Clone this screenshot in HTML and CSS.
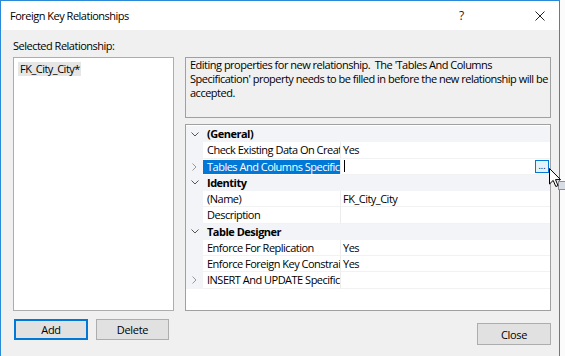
FILE: index.html
```html
<!DOCTYPE html>
<html>
<head>
<meta charset="utf-8">
<link rel="stylesheet" href="styles.css">
</head>
<body>
<div class="dialog">
  <div class="titlebar">
    <span class="title">Foreign Key Relationships</span>
    <span class="help">?</span>
    <svg class="xbtn" width="10" height="10" viewBox="0 0 10 10"><path d="M0.5 0.5 L9.5 9.5 M9.5 0.5 L0.5 9.5" stroke="#222" stroke-width="1" fill="none"/></svg>
  </div>
  <div class="body">
    <div class="label">Selected Relationship:</div>
    <div class="label-spacer"></div>
    <div class="listbox"><div class="item">FK_City_City*</div></div>
    <div class="right">
      <div class="info">Editing properties for new relationship.&nbsp; The 'Tables And Columns<br>Specification' property needs to be filled in before the new relationship will be<br>accepted.</div>
      <div class="pgrid">
        <div class="row cat"><span class="gut"><svg width="8" height="5" viewBox="0 0 8 5"><path d="M0.5 0.5 L4 4 L7.5 0.5" stroke="#555" fill="none"/></svg></span><span class="cname">(General)</span></div>
        <div class="row"><span class="gut"></span><span class="name">Check Existing Data On Creation</span><span class="val">Yes</span></div>
        <div class="row"><span class="gut"><svg width="5" height="8" viewBox="0 0 5 8"><path d="M0.5 0.5 L4 4 L0.5 7.5" stroke="#999" fill="none"/></svg></span><span class="name sel">Tables And Columns Specification</span><span class="val edit"><span class="caret"></span><span class="dots">...</span></span></div>
        <div class="row cat"><span class="gut"><svg width="8" height="5" viewBox="0 0 8 5"><path d="M0.5 0.5 L4 4 L7.5 0.5" stroke="#555" fill="none"/></svg></span><span class="cname">Identity</span></div>
        <div class="row"><span class="gut"></span><span class="name">(Name)</span><span class="val">FK_City_City</span></div>
        <div class="row"><span class="gut"></span><span class="name">Description</span><span class="val"></span></div>
        <div class="row cat"><span class="gut"><svg width="8" height="5" viewBox="0 0 8 5"><path d="M0.5 0.5 L4 4 L7.5 0.5" stroke="#555" fill="none"/></svg></span><span class="cname">Table Designer</span></div>
        <div class="row"><span class="gut"></span><span class="name">Enforce For Replication</span><span class="val">Yes</span></div>
        <div class="row"><span class="gut"></span><span class="name">Enforce Foreign Key Constraint</span><span class="val">Yes</span></div>
        <div class="row"><span class="gut"><svg width="5" height="8" viewBox="0 0 5 8"><path d="M0.5 0.5 L4 4 L0.5 7.5" stroke="#999" fill="none"/></svg></span><span class="name">INSERT And UPDATE Specification</span><span class="val"></span></div>
      </div>
    </div>
    <div class="leftbtns"><button class="btn default">Add</button><button class="btn">Delete</button></div>
    <div class="rightbtns"><button class="btn">Close</button></div>
  </div>
</div>
<div class="dragicon"></div>
<svg class="pointer" width="13" height="20" viewBox="0 0 13 20"><path d="M0.5 0.5 L0.5 16 L4.2 12.4 L6.8 18.5 L9 17.6 L6.5 11.6 L11.5 11.6 Z" fill="#fff" stroke="#000" stroke-width="1" stroke-linejoin="miter"/></svg>
</body>
</html>
```
FILE: styles.css
```css
* { box-sizing: border-box; }
html, body { margin: 0; padding: 0; }
body {
  width: 565px;
  height: 356px;
  overflow: hidden;
  background: #fbfbfb;
  font-family: "Open Sans", "Noto Sans", sans-serif;
  font-size: 11px;
  letter-spacing: -0.5px;
  color: #000;
  position: relative;
}
.dialog {
  width: 560px;
  height: 356px;
  border: 1px solid #2b8ad8;
  border-bottom: none;
  background: #f0f0f0;
  overflow: hidden;
}
.titlebar {
  height: 29px;
  background: #fff;
  display: flex;
  align-items: center;
  padding-left: 9px;
}
.title { font-size: 11px; flex: 1; }
.help { font-size: 12px; width: 14px; margin-right: 62px; color: #222; }
.xbtn { margin-right: 14px; }
.body {
  display: grid;
  grid-template-columns: 161px 366px;
  column-gap: 11px;
  padding: 8px 0 0 12px;
  grid-template-rows: 19px 254px auto;
}
.label { line-height: 15px; height: 19px; }
.listbox {
  background: #fff;
  border: 1px solid #adadad;
  padding: 3px 4px;
}
.item {
  display: inline-block;
  background: #e6e6e6;
  padding: 0 1px 0 2px;
  line-height: 14px;
}
.right { display: flex; flex-direction: column; }
.info {
  height: 61px;
  border: 1px solid #a0a0a0;
  background: #f0f0f0;
  padding: 0 4px;
  line-height: 14px;
  white-space: nowrap;
  overflow: hidden;
  margin-bottom: 6px;
}
.pgrid {
  flex: 1;
  border: 1px solid #a0a0a0;
  background: #fff;
  padding-top: 1px;
}
.row {
  display: grid;
  grid-template-columns: 17px 138px 1fr;
  height: 16.25px;
  line-height: 16px;
}
.row .gut {
  background: #f3f4f7;
  display: flex;
  align-items: center;
  justify-content: center;
}
.row.cat { background: #f3f4f7; }
.row.cat .cname {
  grid-column: 2 / 4;
  font-weight: bold;
  padding-left: 4px;
}
.name {
  padding-left: 4px;
  white-space: nowrap;
  overflow: hidden;
  border-right: 1px solid #ececec;
  border-bottom: 1px solid #f2f2f2;
}
.name.sel {
  background: #0078d7;
  color: #fff;
  border-bottom-color: #fff;
  border-top: 1px solid #fff;
  line-height: 14px;
}
.val {
  padding-left: 2px;
  border-bottom: 1px solid #f2f2f2;
  white-space: nowrap;
  overflow: hidden;
  position: relative;
}
.val.edit { display: flex; align-items: center; }
.caret {
  display: block;
  width: 1px;
  height: 12px;
  background: #000;
  margin-left: 1px;
}
.dots {
  position: absolute;
  right: 1px;
  top: 1px;
  width: 14px;
  height: 13px;
  border: 1px solid #0078d7;
  background: #e5f1fb;
  font-size: 9px;
  line-height: 9px;
  letter-spacing: 0;
  text-align: center;
  color: #000;
}
.leftbtns { display: flex; gap: 8px; margin-top: 8px; padding-left: 1px; }
.rightbtns { display: flex; justify-content: flex-end; margin-top: 12px; }
.btn {
  font-family: "Open Sans", "Noto Sans", sans-serif;
  font-size: 11px;
  letter-spacing: -0.3px;
  height: 21px;
  width: 73px;
  background: #e1e1e1;
  border: 1px solid #adadad;
  padding: 0;
  color: #000;
}
.btn.default { border: 2px solid #0078d7; width: 74px; }
.rightbtns .btn { height: 22px; width: 74px; }
.pointer { position: absolute; left: 549px; top: 168px; }
.dragicon {
  position: absolute;
  left: 558px;
  top: 181px;
  width: 8px;
  height: 9px;
  background: #d8dde3;
  border: 1px solid #8a8f96;
  border-right: none;
}
```
